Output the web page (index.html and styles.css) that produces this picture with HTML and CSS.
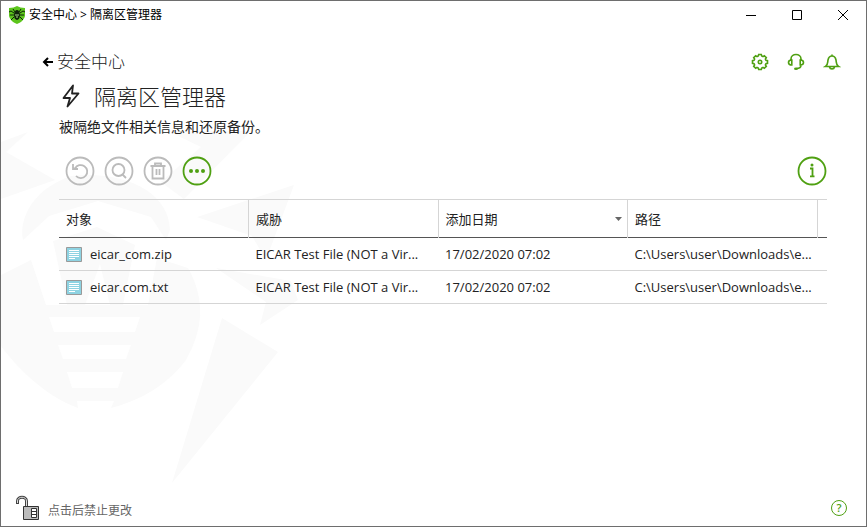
FILE: index.html
```html
<!DOCTYPE html>
<html lang="zh-CN">
<head>
<meta charset="utf-8">
<meta name="viewport" content="width=device-width, initial-scale=1">
<title>隔离区管理器</title>
<link rel="stylesheet" href="styles.css">
</head>
<body>
<div class="window">
  <svg class="watermark" width="300" height="380" viewBox="0 120 300 380" aria-hidden="true">
    <g fill="#fafafa">
      <path d="M0 142 27 132 5 152 54 180 0 199Z"/>
      <path d="M167 131 250 131 183 199 160 182 200 147Z"/>
      <path d="M293 185 265 260 251 236 196 217Z"/>
      <path d="M215 268 290 281 297 300 259 325 265 302Z"/>
      <path d="M221 318 277 352 171 483Z"/>
      <path d="M22 240C18 220 30 190 70 176 120 170 168 190 169 230L165 240 150 217 97 201 48 216Z"/>
      <path d="M52 241 96 227 134 245 122 305H109L99 264 84 305H66Z"/>
      <path d="M0 275 30 260 45 305H147L156 258 187 268C205 300 202 330 185 360 165 386 140 400 110 408L113 401H76L77 408C45 396 18 370 0 346Z"/>
    </g>
    <g fill="#fff">
      <path d="M48 317H139L134 332H53ZM57 345H130L125 359H62ZM66 372H122L117 388H71Z"/>
    </g>
  </svg>
  <header class="titlebar">
    <svg class="logo" width="18" height="18" viewBox="0 0 18 18" aria-hidden="true">
      <path d="M1 2Q6 2 9 0 12 2 17 2V10Q16 15 9 18 2 15 1 10Z" fill="#5cc51c"/>
      <g stroke="#10220b" fill="none"><path d="M7 6 5 3M11 6 13 3M6 7 3 5 1 6M12 7 15 5 17 6M6 9H2M12 9H16M6 11 3 14M12 11 15 14"/></g>
      <ellipse cx="9" cy="9" rx="3" ry="5" fill="#10220b"/><path d="M7 9H11M8 11H10" stroke="#a9dd8b"/>
    </svg>
    <span class="caption">安全中心 &gt; 隔离区管理器</span>
    <button class="win-btn" aria-label="最小化"><svg width="12" height="12" viewBox="0 0 12 12"><path d="M1 6.500H11" stroke="#000"/></svg></button>
    <button class="win-btn" aria-label="最大化"><svg width="12" height="12" viewBox="0 0 12 12"><path d="M1.500 1.500H10.500V10.500H1.500Z" fill="none" stroke="#000"/></svg></button>
    <button class="win-btn" aria-label="关闭"><svg width="12" height="12" viewBox="0 0 12 12"><path d="M1 1 11 11M11 1 1 11" stroke="#000"/></svg></button>
  </header>
  <main class="content">
    <div class="top-row">
      <a class="back" href="#"><svg width="12" height="12" viewBox="0 0 12 12" aria-hidden="true"><path d="M11 6H2M6 2 2 6 6 10" fill="none" stroke="#000" stroke-width="2"/></svg>安全中心</a>
      <nav class="tools" aria-label="工具">
        <button class="icon-btn" aria-label="设置"><svg width="18" height="18" viewBox="0 0 18 18"><path d="M7.300 3 7.700 1.500H10.300L10.700 3 12 3.600 13.300 2.700 15.300 4.700 14.400 6 15 7.300 16.500 7.700V10.300L15 10.700 14.400 12 15.300 13.300 13.300 15.300 12 14.400 10.700 15 10.300 16.500H7.700L7.300 15 6 14.400 4.700 15.300 2.700 13.300 3.600 12 3 10.700 1.500 10.300V7.700L3 7.300 3.600 6 2.700 4.700 4.700 2.700 6 3.600Z"/><circle cx="9" cy="9" r="1.700"/></svg></button>
        <button class="icon-btn" aria-label="支持"><svg width="18" height="18" viewBox="0 0 18 18"><path d="M4 7V6C4 0 14 0 14 6V7M4.800 7V12C2.500 12 1.500 11 1.500 9.500S2.500 7 4.800 7ZM13.200 7V12C15.500 12 16.500 11 16.500 9.500S15.500 7 13.200 7ZM14 12C14 14.500 12 15.500 9.500 15.500"/><ellipse cx="9" cy="15.700" rx="2" ry="1.200" fill="#4fa012" stroke="none"/></svg></button>
        <button class="icon-btn" aria-label="通知"><svg width="18" height="18" viewBox="0 0 18 18"><path d="M2.500 13.500C5 12 4.500 10 5 7 5.500 4.500 7 3 9 3S12.500 4.500 13 7C13.500 10 13 12 15.500 13.500ZM9 3V1.500M6.500 14C7 16.500 11 16.500 11.500 14"/></svg></button>
      </nav>
    </div>
    <div class="heading">
      <svg width="18" height="24" viewBox="0 0 18 24" aria-hidden="true"><path d="M11 1.500 1.500 14H8L5.500 22.500 16.500 9.500H10Z" fill="none" stroke="#222" stroke-width="1.800" stroke-linejoin="round"/></svg>
      <h1>隔离区管理器</h1>
    </div>
    <p class="desc">被隔绝文件相关信息和还原备份。</p>
    <div class="toolbar">
      <button class="round" disabled aria-label="还原"><svg width="30" height="30" viewBox="0 0 30 30"><circle cx="15" cy="15" r="13.500"/><path d="M8.500 12.500H10A6.500 6.500 0 1 1 11 20M8 8V13H13"/></svg></button>
      <button class="round" disabled aria-label="扫描"><svg width="30" height="30" viewBox="0 0 30 30"><circle cx="15" cy="15" r="13.500"/><circle cx="14.500" cy="14" r="6"/><path d="M18.500 18.500 22 22"/></svg></button>
      <button class="round" disabled aria-label="删除"><svg width="30" height="30" viewBox="0 0 30 30"><circle cx="15" cy="15" r="13.500"/><path d="M7.500 10H22.500M9.500 10V22.500H20.500V10M12 9V7.500H18V9M13.500 13V19M16.500 13V19"/></svg></button>
      <button class="round active" aria-label="更多"><svg width="30" height="30" viewBox="0 0 30 30"><circle cx="15" cy="15" r="13.500"/><g fill="#4fa012" stroke="none"><circle cx="9" cy="15" r="2"/><circle cx="15" cy="15" r="2"/><circle cx="21" cy="15" r="2"/></g></svg></button>
      <button class="round active info" aria-label="信息"><svg width="30" height="30" viewBox="0 0 30 30"><circle cx="15" cy="15" r="13.500"/><path d="M13 12.500H15.500V20M13 20.300H17.500"/><circle cx="15" cy="9" r="1.500" fill="#4fa012" stroke="none"/></svg></button>
    </div>
    <table class="list">
      <colgroup><col class="c-data"><col class="c-data"><col class="c-data"><col class="c-data"><col class="c-end"></colgroup>
      <thead><tr><th>对象</th><th>威胁</th><th><span class="sort">添加日期<svg width="7" height="4" viewBox="0 0 7 4" aria-hidden="true"><path d="M0 0H7L3.500 4Z" fill="#666"/></svg></span></th><th>路径</th><td></td></tr></thead>
      <tbody>
        <tr><td><span class="file"><svg width="16" height="15" viewBox="0 0 16 15" aria-hidden="true"><path d="M.5.500H15.500V14.500H.5Z" fill="#8ed3e2" stroke="#999"/><path d="M3 3.500H13M3 5.500H13M3 7.500H13M3 9.500H13M3 11.500H9" stroke="#fff"/></svg>eicar_com.zip</span></td><td>EICAR Test File (NOT a Vir...</td><td>17/02/2020 07:02</td><td>C:\Users\user\Downloads\e...</td><td></td></tr>
        <tr><td><span class="file"><svg width="16" height="15" viewBox="0 0 16 15" aria-hidden="true"><path d="M.5.500H15.500V14.500H.5Z" fill="#8ed3e2" stroke="#999"/><path d="M3 3.500H13M3 5.500H13M3 7.500H13M3 9.500H13M3 11.500H9" stroke="#fff"/></svg>eicar.com.txt</span></td><td>EICAR Test File (NOT a Vir...</td><td>17/02/2020 07:02</td><td>C:\Users\user\Downloads\e...</td><td></td></tr>
      </tbody>
    </table>
  </main>
  <footer class="footer">
    <button class="lock"><svg width="26" height="26" viewBox="0 0 26 26" aria-hidden="true"><path d="M2.500 9V6C2.500 1 11.500 1 11.500 6V11" fill="none" stroke="#444" stroke-width="3"/><path d="M2.500 8V6C2.500 1 11.500 1 11.500 6V11" fill="none" stroke="#ddd"/><path d="M8.500 11.500H23.500V24.500H8.500Z" fill="#bbb" stroke="#333"/><path d="M16.500 13.500H21.500V22.500H16.500ZM16.500 16.500H21.500M16.500 19.500H21.500" fill="#fff" stroke="#333"/></svg><span>点击后禁止更改</span></button>
    <button class="help" aria-label="帮助">?</button>
  </footer>
</div>
</body>
</html>
```
FILE: styles.css
```css
* { box-sizing: border-box; }

body {
  margin: 0;
  font: 13px/20px "Open Sans", "Noto Sans CJK SC", sans-serif;
  color: #222;
}

button {
  padding: 0;
  border: 0;
  background: none;
  font: inherit;
  color: inherit;
}

svg { display: block; flex: none; }

.window {
  position: relative;
  display: flex;
  flex-direction: column;
  min-height: 100vh;
  border: 1px solid #6e6e6e;
  background: #fff;
}

.watermark { position: absolute; left: 0; top: 119px; }

.titlebar, .content, .footer { position: relative; }

.titlebar {
  display: flex;
  align-items: center;
  height: 28px;
  padding-left: 7px;
}

.caption {
  flex: 1;
  margin-left: 3px;
  font-size: 12px;
  color: #000;
}

.win-btn {
  display: grid;
  place-items: center;
  width: 46px;
  height: 28px;
}

.content {
  flex: 1;
  padding: 20px 39px 0 58px;
}

.top-row {
  display: flex;
  justify-content: space-between;
  align-items: center;
  height: 26px;
}

.back {
  display: flex;
  align-items: center;
  gap: 3px;
  margin-left: -17px;
  font-size: 17px;
  font-weight: 300;
  color: inherit;
  text-decoration: none;
}

.tools { display: flex; gap: 18px; margin-right: -14px; }

.icon-btn svg { fill: none; stroke: #4fa012; stroke-width: 1.6; }

.heading {
  display: flex;
  align-items: center;
  gap: 14px;
  height: 42px;
  padding-left: 3px;
}

h1 {
  margin: 0;
  font-size: 22px;
  line-height: 32px;
  font-weight: 300;
}

.desc { margin: 0; font-size: 14px; }

.toolbar {
  display: flex;
  gap: 9px;
  padding: 19px 0 13px 6px;
}

.round svg { fill: none; stroke: #bbb; stroke-width: 1.8; }
.round.active svg { stroke: #4fa012; }
.info { margin-left: auto; }

.list {
  width: 100%;
  border-collapse: collapse;
  table-layout: fixed;
  border-top: 1px solid #d5d5d5;
}

.c-end { width: 10px; }

th, td {
  padding: 0 0 0 7px;
  text-align: left;
  white-space: nowrap;
  overflow: hidden;
}

thead tr { height: 38px; border-bottom: 1px solid #555; }

th {
  font-weight: 400;
  border-right: 1px solid #d5d5d5;
}

tbody tr { height: 33px; border-bottom: 1px solid #d5d5d5; }

.sort {
  display: flex;
  align-items: center;
  justify-content: space-between;
  padding-right: 5px;
}

.file { display: flex; align-items: center; gap: 8px; }

.footer {
  display: flex;
  align-items: center;
  justify-content: space-between;
  padding: 0 19px 5px 14px;
}

.lock {
  display: flex;
  align-items: flex-end;
  gap: 7px;
  font-size: 12px;
  color: #666;
}

.help {
  width: 16px;
  height: 16px;
  border: 1px solid #4fa012;
  border-radius: 50%;
  font-size: 11px;
  font-weight: 600;
  line-height: 14px;
  color: #4fa012;
}
```
